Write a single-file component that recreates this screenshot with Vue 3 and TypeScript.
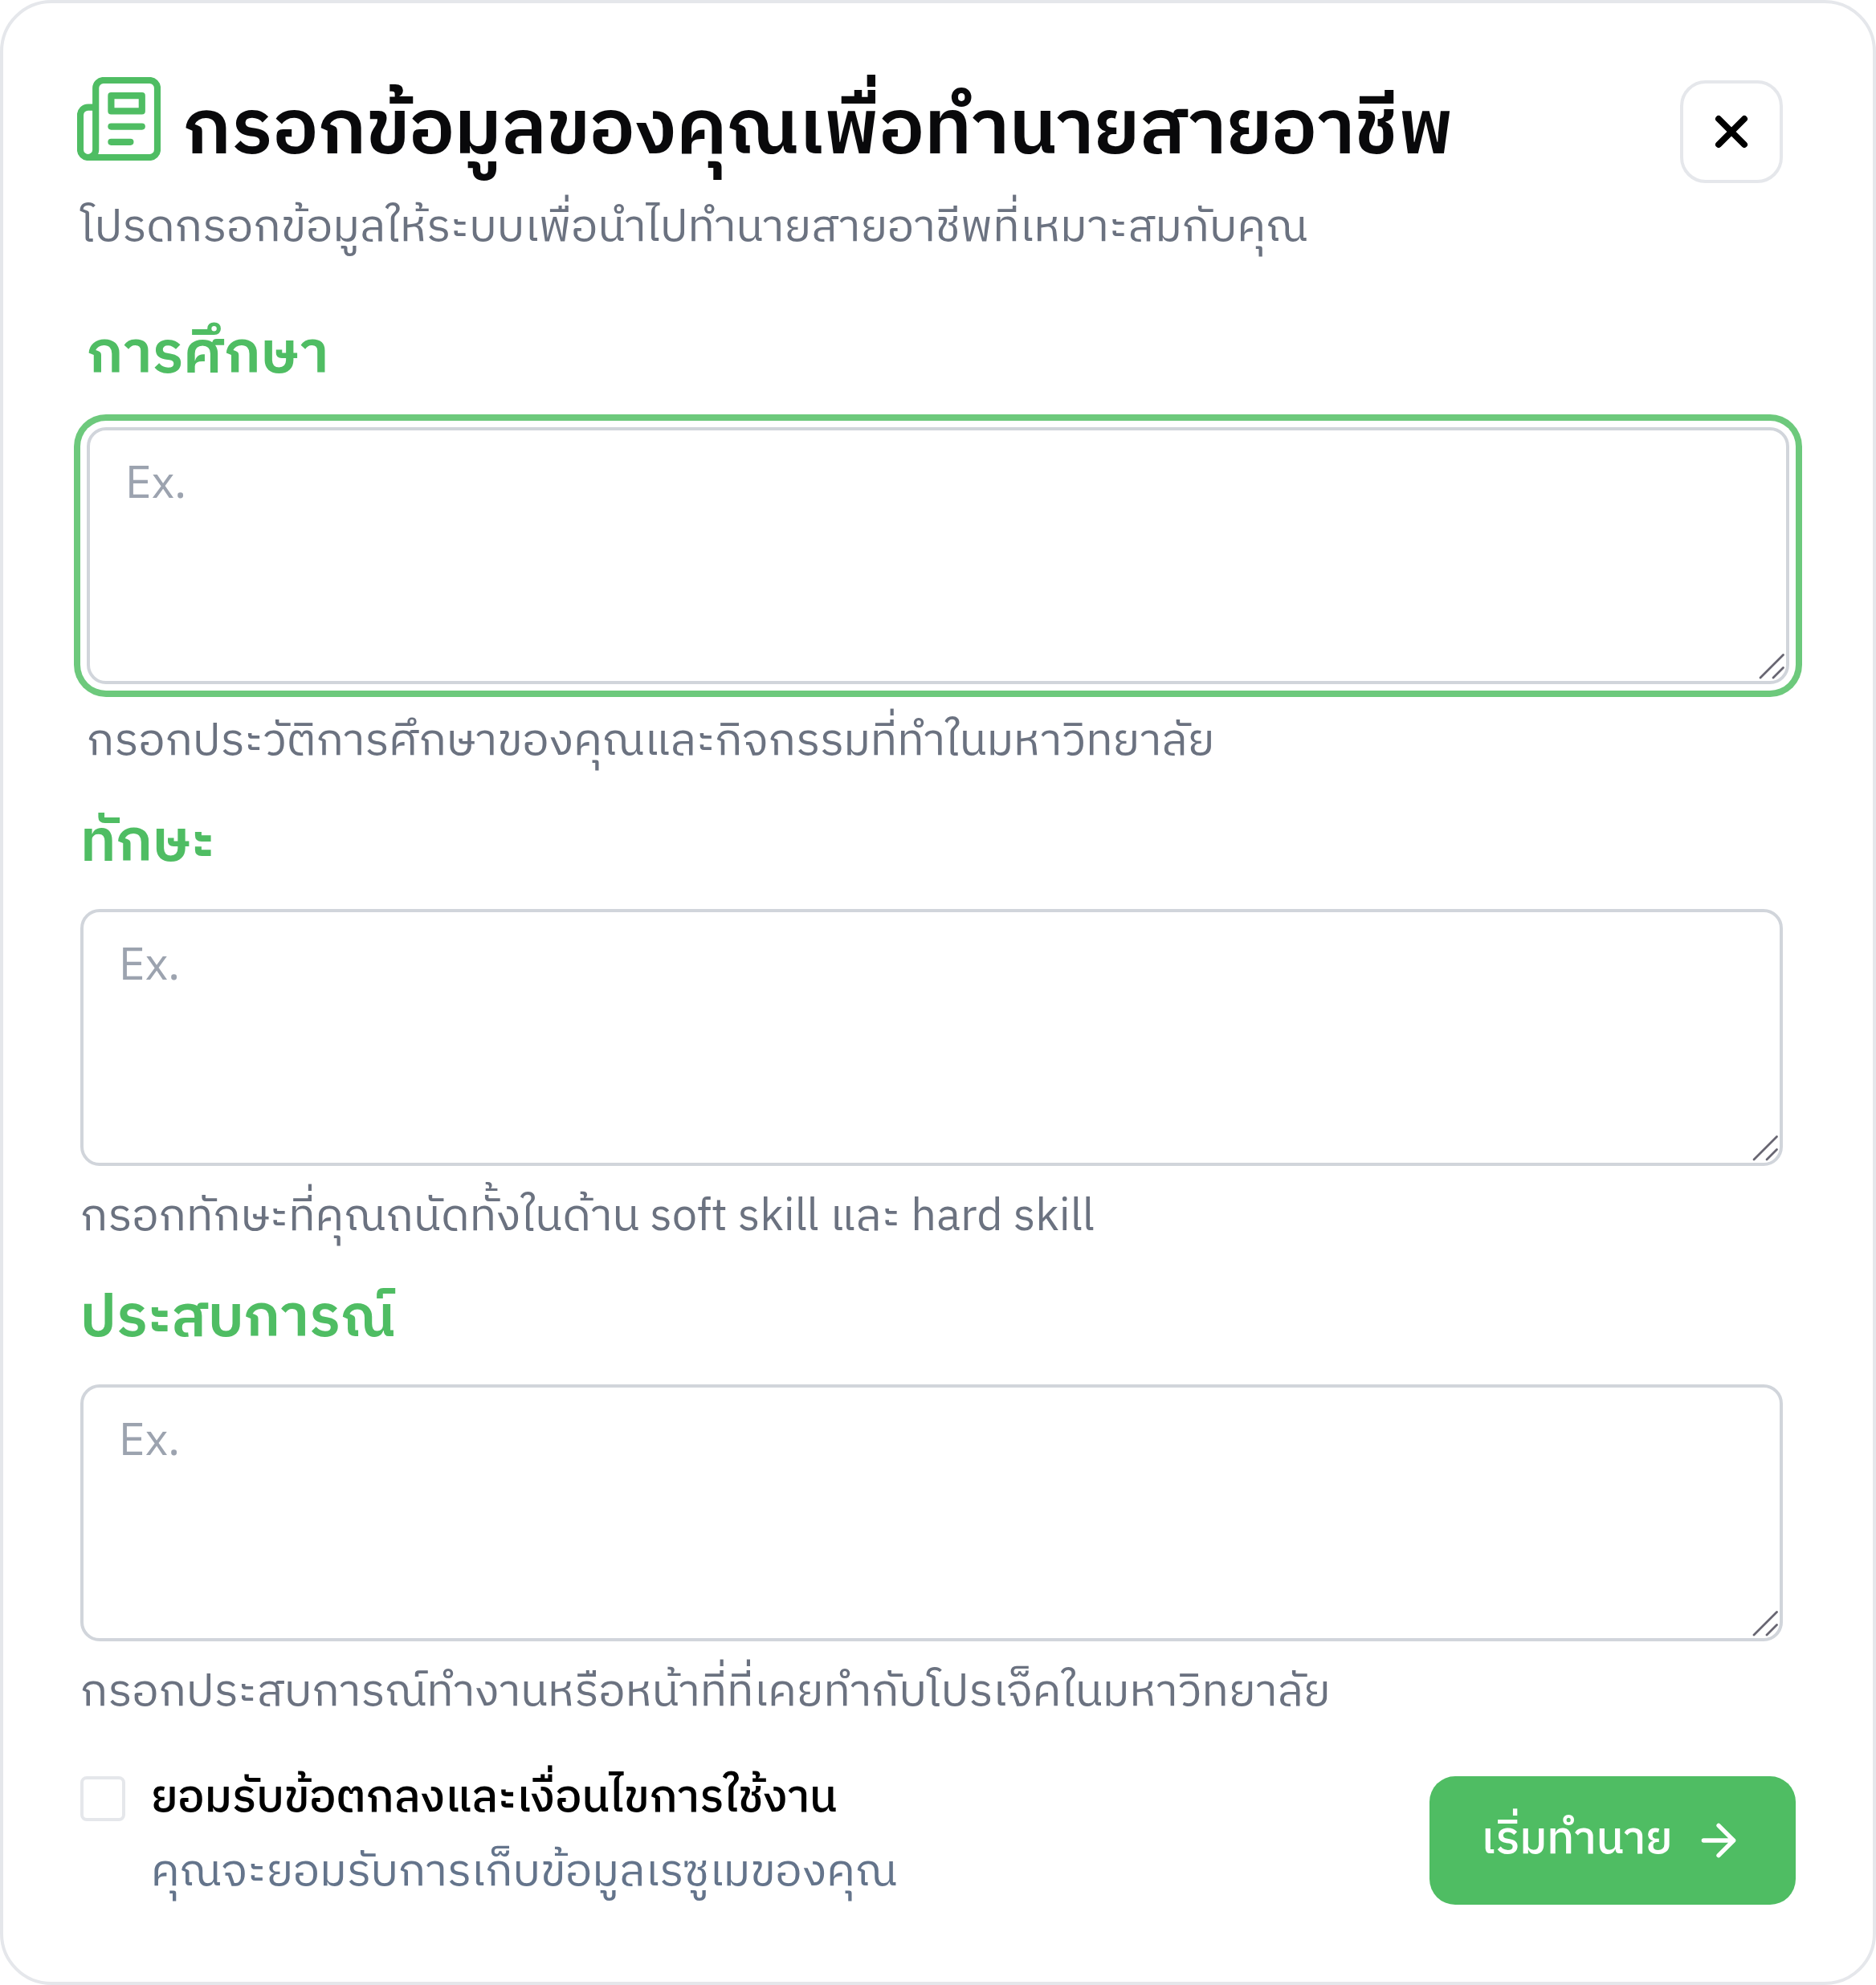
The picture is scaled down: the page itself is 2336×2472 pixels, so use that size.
<script setup lang="ts">
import { ref } from 'vue'

interface Field {
  id: string
  label: string
  hint: string
  active: boolean
}

const fields: Field[] = [
  { id: 'education', label: 'การศึกษา', hint: 'กรอกประวัติการศึกษาของคุณและกิจกรรมที่ทำในมหาวิทยาลัย', active: true },
  { id: 'skills', label: 'ทักษะ', hint: 'กรอกทักษะที่คุณถนัดทั้งในด้าน soft skill และ hard skill', active: false },
  { id: 'experience', label: 'ประสบการณ์', hint: 'กรอกประสบการณ์ทำงานหรือหน้าที่ที่เคยทำกับโปรเจ็คในมหาวิทยาลัย', active: false },
]

const values = ref<Record<string, string>>({ education: '', skills: '', experience: '' })
const accepted = ref(false)
</script>

<template>
  <form class="dialog" @submit.prevent>
    <header class="header">
      <div class="heading">
        <div class="title-row">
          <svg class="news-icon" viewBox="1.167 1.167 21.667 21.667" fill="none" stroke="currentColor" stroke-width="1.7" stroke-linecap="round" stroke-linejoin="round">
            <path d="M4 22h16a2 2 0 0 0 2-2V4a2 2 0 0 0-2-2H8a2 2 0 0 0-2 2v16a2 2 0 0 1-2 2Zm0 0a2 2 0 0 1-2-2v-9c0-1.1.9-2 2-2h2" />
            <path d="M18 14h-8" />
            <path d="M15 18h-5" />
            <path d="M10 6h8v4h-8V6Z" />
          </svg>
          <h2 class="title">กรอกข้อมูลของคุณเพื่อทำนายสายอาชีพ</h2>
        </div>
        <p class="muted">โปรดกรอกข้อมูลให้ระบบเพื่อนำไปทำนายสายอาชีพที่เหมาะสมกับคุณ</p>
      </div>
      <button class="close" type="button" aria-label="ปิด">
        <svg viewBox="0 0 24 24" fill="none" stroke="currentColor" stroke-width="3" stroke-linecap="round">
          <path d="M18 6 6 18M6 6l12 12" />
        </svg>
      </button>
    </header>

    <section v-for="f in fields" :key="f.id" class="field" :class="{ active: f.active }">
      <label class="label" :for="f.id">{{ f.label }}</label>
      <div class="box">
        <textarea :id="f.id" v-model="values[f.id]" placeholder="Ex."></textarea>
        <svg class="grip" viewBox="0 0 32 32" fill="none" stroke="#686672" stroke-width="2.8" stroke-linecap="round">
          <path d="M0 32 28.5 3.5M16 32l12.5-12.5" transform="translate(0 -4)" />
        </svg>
      </div>
      <p class="muted">{{ f.hint }}</p>
    </section>

    <footer class="footer">
      <div class="consent">
        <input id="accept" v-model="accepted" type="checkbox" />
        <div class="consent-text">
          <label class="consent-label" for="accept">ยอมรับข้อตกลงและเงื่อนไขการใช้งาน</label>
          <p class="consent-sub">คุณจะยอมรับการเก็บข้อมูลเรซูเมของคุณ</p>
        </div>
      </div>
      <button class="submit" type="submit">
        <span>เริ่มทำนาย</span>
        <svg viewBox="0 0 24 24" fill="none" stroke="currentColor" stroke-width="2" stroke-linecap="round" stroke-linejoin="round">
          <path d="M5 12h14M12 5l7 7-7 7" />
        </svg>
      </button>
    </footer>
  </form>
</template>

<style>
body {
  background: #fff;
}
</style>

<style scoped>
* {
  box-sizing: border-box;
  margin: 0;
}
.dialog {
  width: 2336px;
  height: 2472px;
  padding: 96px;
  border: 4px solid #e5e7eb;
  border-radius: 64px;
  background: #fff;
  font-family: 'IBM Plex Sans Thai', 'Noto Sans Thai', 'Noto Sans', sans-serif;
  font-size: 56px;
  line-height: 80px;
  white-space: nowrap;
}
.header {
  display: flex;
  justify-content: space-between;
  align-items: flex-start;
  margin-right: 16px;
}
.heading {
  display: flex;
  flex-direction: column;
  gap: 16px;
}
.title-row {
  display: flex;
  gap: 28px;
  height: 128px;
  margin-left: -4px;
}
.news-icon {
  width: 104px;
  height: 104px;
  margin-top: -4px;
  color: #4fbd63;
}
.title {
  font-size: 94.8px;
  line-height: 128px;
  font-weight: 600;
  color: #09090b;
}
.muted {
  color: #6b7280;
}
.close {
  display: flex;
  align-items: center;
  justify-content: center;
  width: 128px;
  height: 128px;
  padding: 0;
  border: 4px solid #e5e7eb;
  border-radius: 32px;
  background: #fff;
  color: #000;
}
.close svg,
.submit svg {
  width: 64px;
  height: 64px;
}
.field {
  display: flex;
  flex-direction: column;
  gap: 24px;
  width: 2120px;
  margin-top: 32px;
}
.field.active {
  gap: 32px;
  margin-top: 64px;
  margin-left: 8px;
}
.label {
  margin-bottom: 2px;
  font-size: 72px;
  line-height: 110px;
  font-weight: 600;
  color: #4fbd63;
}
.box {
  position: relative;
  height: 320px;
}
textarea {
  display: block;
  width: 100%;
  height: 100%;
  padding: 28px 44px;
  border: 4px solid #d1d5db;
  border-radius: 24px;
  outline: none;
  background: #fff;
  font: inherit;
  color: #09090b;
  resize: none;
}
.active textarea {
  box-shadow: 0 0 0 8px #fff, 0 0 0 16px #6dc97c;
}
textarea::placeholder {
  color: #9ca3af;
  opacity: 1;
}
.grip {
  position: absolute;
  right: 4px;
  bottom: 4px;
  width: 32px;
  height: 32px;
  overflow: visible;
}
.footer {
  display: flex;
  justify-content: space-between;
  align-items: flex-start;
  margin-top: 64px;
}
.consent {
  display: flex;
  gap: 32px;
}
.consent input {
  appearance: none;
  width: 56px;
  height: 56px;
  border: 4px solid #e5e7eb;
  border-radius: 8px;
}
.consent-text {
  display: flex;
  flex-direction: column;
  gap: 24px;
}
.consent-label {
  line-height: 56px;
  font-weight: 500;
  color: #000;
}
.consent-sub {
  color: #64748b;
}
.submit {
  display: flex;
  align-items: center;
  justify-content: space-between;
  width: 456px;
  height: 160px;
  padding: 0 64px;
  border: 0;
  border-radius: 32px;
  background: #4fbd63;
  color: #fff;
  font: inherit;
  font-weight: 500;
}
</style>
